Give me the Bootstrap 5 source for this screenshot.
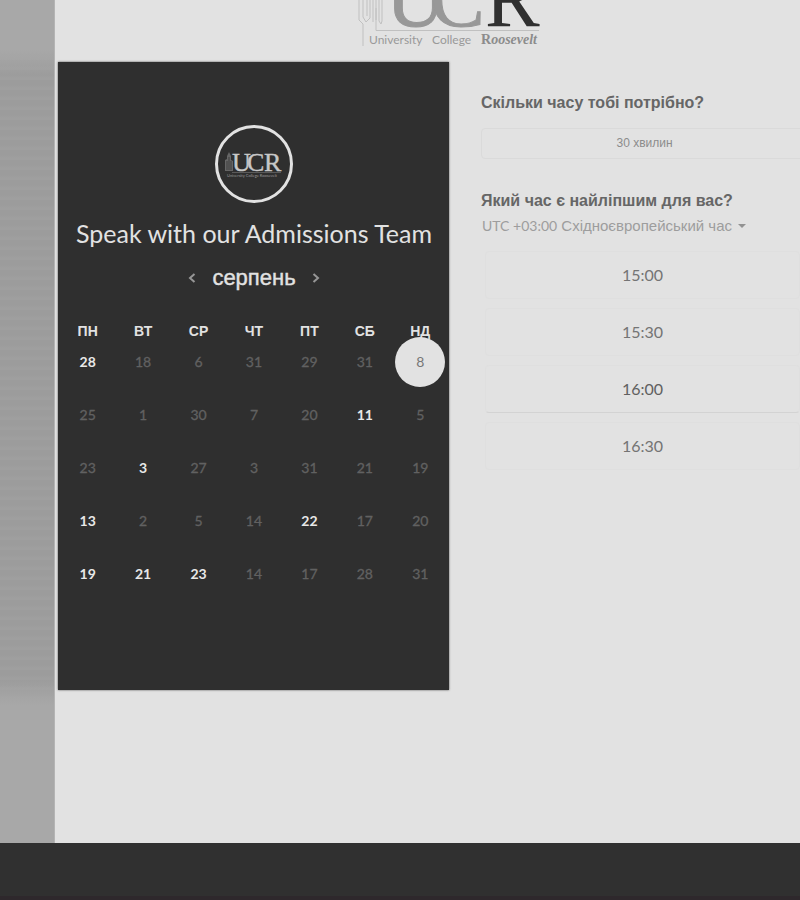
<!DOCTYPE html>
<html lang="uk">
<head>
<meta charset="utf-8">
<meta name="viewport" content="width=device-width, initial-scale=1">
<title>Speak with our Admissions Team</title>
<link href="https://cdn.jsdelivr.net/npm/bootstrap@5.3.0/dist/css/bootstrap.min.css" rel="stylesheet">
<style>
body { font-family: "Liberation Sans", sans-serif; background: #e2e2e2; color: #606060; }
.latin { font-family: Lato, sans-serif; }
.side-strip { flex: 0 0 55px; border-right: 1px solid #b4b4b4;
  background: linear-gradient(#a8a8a8 50px, transparent 75px, transparent 680px, #a8a8a8 705px),
    repeating-linear-gradient(#9c9c9c 0 5px, #9f9f9f 8px 10px); }
.site-logo { height: 62px; padding-left: 43px; }
.site-logo svg { width: 184px; height: 48px; }
.booking { grid-template-columns: minmax(0, 391fr) minmax(0, 351fr); padding-left: 3px; }
.calendar { background: #2f2f2f; color: #e2e2e2; padding: 63px 1px 90px 2px; box-shadow: 0 0 2px #555; }
.avatar { width: 78px; height: 78px; border: 3px solid #e2e2e2; }
.team-title { font-size: 25px; line-height: 30px; margin: 15px 0; white-space: nowrap; }
.month { gap: 16px; height: 30px; margin-bottom: 34px; }
.month h2 { font-size: 22px; line-height: 30px; -webkit-text-stroke: .4px; }
.month button { width: 8px; height: 16px; color: #969696; }
.days { table-layout: fixed; }
.days th { font-size: 14px; line-height: 8px; height: 8px; padding: 0; }
.days td { height: 53px; padding: 0; vertical-align: middle; }
.day { width: 50px; height: 50px; font-size: 14px; color: #e8e8e8; font-weight: 700; }
.day:disabled { color: #616161; font-weight: 400; opacity: 1; -webkit-text-stroke: .3px; }
.day.chosen { position: relative; background: #e2e2e2; color: #777; font-weight: 400; }
.options { padding: 31px 0 0 32px; }
.options h3 { font-size: 16px; line-height: 20px; color: #666; }
.duration { height: 31px; line-height: 27px; margin: 15px -8px 32px 0; font-size: 12px; color: #8c8c8c; border: 1px solid #dadada; }
.zone { font-size: 15px; line-height: 20px; margin: 5px 0 15px 1px; color: #9d9d9d; white-space: nowrap; }
.zone .latin { font-size: 14px; }
.zone svg { width: 8px; height: 5px; margin-left: 6px; }
.slots { gap: 9px; padding: 0 0 0 4px; }
.slot { height: 48px; font-size: 16px; color: #747474; border: 1px solid #dfdfdf; }
.slot.current { color: #606060; border-bottom-color: #d3d3d3; }
.site-foot { height: 57px; background: #303030; border-bottom: 4px solid #2e282c; }
</style>
<script src="https://cdn.jsdelivr.net/npm/bootstrap@5.3.0/dist/js/bootstrap.bundle.min.js"></script>
</head>
<body class="d-flex flex-column min-vh-100 overflow-hidden">
<div class="d-flex flex-grow-1">
  <aside class="side-strip"></aside>
  <main class="flex-grow-1">
    <header class="site-logo d-flex justify-content-center">
      <svg class="d-block" viewBox="357 0 184 48" role="img" aria-label="University College Roosevelt">
        <g fill="none" stroke="#c0c0c0" stroke-width="1">
          <path d="M359 0v20l4 4v22M363 0v17l3 5 4-4V0M367 0v16M373 0v22M376 0v30.500H539M379 0v21l2 3 1-3V0M376 8v12"/>
        </g>
        <g font-family="Liberation Serif, serif" font-size="82">
          <text x="386" y="26" fill="#989898" stroke="#989898">U</text>
          <text x="430" y="26" fill="#989898" stroke="#989898">C</text>
          <text x="485" y="26" fill="#303030">R</text>
        </g>
        <g font-family="Lato, sans-serif" font-size="12" fill="#999">
          <text x="369" y="44">University</text>
          <text x="432" y="44">College</text>
        </g>
        <text x="481" y="44" font-family="Liberation Serif, serif" font-size="14" font-weight="700" fill="#8c8c8c">R<tspan font-style="italic">oosevelt</tspan></text>
      </svg>
    </header>
    <div class="booking d-grid align-items-start">
      <section class="calendar text-center">
        <div class="avatar rounded-circle mx-auto d-flex">
          <svg width="72" height="72" viewBox="0 0 72 72" role="img" aria-label="UCR">
            <path d="M7 43V32l2-1v-3l2-4 2 4v4l2 1v10z" fill="#666"/>
            <path d="M9 33v9M11 29v13M13 33v9" stroke="#3c3c3c" fill="none"/>
            <g font-family="Liberation Serif, serif" font-size="26" fill="#c8c8c8" stroke="#c8c8c8" stroke-width=".4">
              <text x="14" y="43">U</text><text x="29" y="43">C</text><text x="46" y="43">R</text>
            </g>
            <path d="M14 44.500H63" stroke="#777" stroke-width=".6"/>
            <text x="9" y="49" font-family="Lato, sans-serif" font-size="4" fill="#999">University College Roosevelt</text>
          </svg>
        </div>
        <h1 class="team-title latin fw-normal">Speak with our Admissions Team</h1>
        <div class="month d-flex justify-content-center align-items-center">
          <button class="btn p-0 border-0 d-flex align-items-center" type="button" aria-label="Попередній місяць"><svg width="8" height="10" viewBox="0 0 8 10" fill="none" stroke="currentColor" stroke-width="2"><path d="M6.500 1 2 5l4.500 4"/></svg></button>
          <h2 class="m-0 fw-normal">серпень</h2>
          <button class="btn p-0 border-0 d-flex align-items-center" type="button" aria-label="Наступний місяць"><svg width="8" height="10" viewBox="0 0 8 10" fill="none" stroke="currentColor" stroke-width="2"><path d="M1.500 1 6 5 1.500 9"/></svg></button>
        </div>
        <table class="days w-100">
          <thead><tr><th>ПН</th><th>ВТ</th><th>СР</th><th>ЧТ</th><th>ПТ</th><th>СБ</th><th>НД</th></tr></thead>
          <tbody class="latin">
            <tr><td><button class="day btn p-0 border-0">28</button></td><td><button class="day btn p-0 border-0" disabled>18</button></td><td><button class="day btn p-0 border-0" disabled>6</button></td><td><button class="day btn p-0 border-0" disabled>31</button></td><td><button class="day btn p-0 border-0" disabled>29</button></td><td><button class="day btn p-0 border-0" disabled>31</button></td><td><button class="day chosen btn p-0 border-0 rounded-circle" aria-pressed="true">8</button></td></tr>
            <tr><td><button class="day btn p-0 border-0" disabled>25</button></td><td><button class="day btn p-0 border-0" disabled>1</button></td><td><button class="day btn p-0 border-0" disabled>30</button></td><td><button class="day btn p-0 border-0" disabled>7</button></td><td><button class="day btn p-0 border-0" disabled>20</button></td><td><button class="day btn p-0 border-0">11</button></td><td><button class="day btn p-0 border-0" disabled>5</button></td></tr>
            <tr><td><button class="day btn p-0 border-0" disabled>23</button></td><td><button class="day btn p-0 border-0">3</button></td><td><button class="day btn p-0 border-0" disabled>27</button></td><td><button class="day btn p-0 border-0" disabled>3</button></td><td><button class="day btn p-0 border-0" disabled>31</button></td><td><button class="day btn p-0 border-0" disabled>21</button></td><td><button class="day btn p-0 border-0" disabled>19</button></td></tr>
            <tr><td><button class="day btn p-0 border-0">13</button></td><td><button class="day btn p-0 border-0" disabled>2</button></td><td><button class="day btn p-0 border-0" disabled>5</button></td><td><button class="day btn p-0 border-0" disabled>14</button></td><td><button class="day btn p-0 border-0">22</button></td><td><button class="day btn p-0 border-0" disabled>17</button></td><td><button class="day btn p-0 border-0" disabled>20</button></td></tr>
            <tr><td><button class="day btn p-0 border-0">19</button></td><td><button class="day btn p-0 border-0">21</button></td><td><button class="day btn p-0 border-0">23</button></td><td><button class="day btn p-0 border-0" disabled>14</button></td><td><button class="day btn p-0 border-0" disabled>17</button></td><td><button class="day btn p-0 border-0" disabled>28</button></td><td><button class="day btn p-0 border-0" disabled>31</button></td></tr>
          </tbody>
        </table>
      </section>
      <section class="options d-flex flex-column">
        <h3 class="m-0 fw-bold">Скільки часу тобі потрібно?</h3>
        <button class="duration btn p-0 rounded-1" type="button">30 хвилин</button>
        <h3 class="m-0 fw-bold">Який час є найліпшим для вас?</h3>
        <button class="zone btn p-0 border-0 text-start d-flex align-items-center" type="button"><span><span class="latin">UTC +03:00</span> Східноєвропейський час</span><svg viewBox="0 0 8 5" aria-hidden="true"><path d="M0 0h8L4 4z" fill="#929292"/></svg></button>
        <div class="slots d-flex flex-column latin">
          <button class="slot btn p-0 rounded-1" type="button">15:00</button>
          <button class="slot btn p-0 rounded-1" type="button">15:30</button>
          <button class="slot current btn p-0 rounded-1" type="button">16:00</button>
          <button class="slot btn p-0 rounded-1" type="button">16:30</button>
        </div>
      </section>
    </div>
  </main>
</div>
<footer class="site-foot"></footer>
</body>
</html>
